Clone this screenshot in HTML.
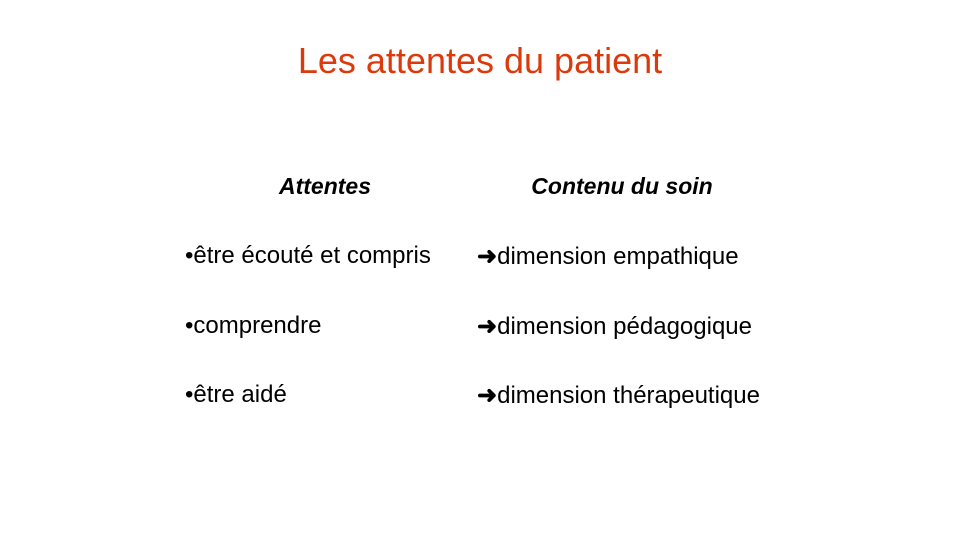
<!DOCTYPE html>
<html><head><meta charset="utf-8"><style>
body{margin:0;width:960px;height:540px;background:#fff;font-family:"Liberation Sans",sans-serif;position:relative;overflow:hidden;color:#000}
.t{position:absolute;left:0;width:960px;top:40px;text-align:center;font-size:36px;color:#dc3a0c}
.h{position:absolute;top:173px;font-size:23px;font-weight:bold;font-style:italic;text-align:center;width:300px}
.r{position:absolute;font-size:24px;white-space:nowrap}
.a{display:inline-block;font-weight:bold}
</style></head><body>
<div class="t">Les attentes du patient</div>
<div class="h" style="left:175px">Attentes</div>
<div class="h" style="left:472px">Contenu du soin</div>
<div class="r" style="left:185px;top:242px">•être écouté et compris</div>
<div class="r" style="left:185px;top:312px">•comprendre</div>
<div class="r" style="left:185px;top:381px">•être aidé</div>
<div class="r" style="left:477px;top:242px"><span class="a">➜</span>dimension empathique</div>
<div class="r" style="left:477px;top:312px"><span class="a">➜</span>dimension pédagogique</div>
<div class="r" style="left:477px;top:381px"><span class="a">➜</span>dimension thérapeutique</div>
</body></html>
